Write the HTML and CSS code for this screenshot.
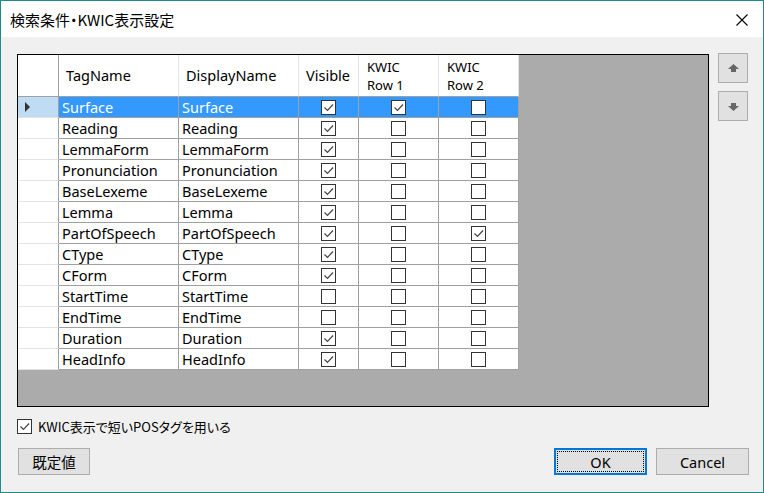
FILE: index.html
```html
<!DOCTYPE html>
<html lang="ja">
<head>
<meta charset="utf-8">
<link rel="stylesheet" href="styles.css">
</head>
<body>
<div class="window">
  <div class="titlebar">
    <span class="title">検索条件・KWIC表示設定</span>
    <svg class="close" width="12" height="12" viewBox="0 0 12 12"><path d="M0.5 0.5 L11.5 11.5 M11.5 0.5 L0.5 11.5" stroke="#000" stroke-width="1.1" fill="none"/></svg>
  </div>
  <div class="content">
    <div class="main">
      <div class="frame">
        <div class="grid">
          <div class="hc corner"></div>
          <div class="hc">TagName</div>
          <div class="hc">DisplayName</div>
          <div class="hc">Visible</div>
          <div class="hc two"><span>KWIC</span><span>Row 1</span></div>
          <div class="hc two"><span>KWIC</span><span>Row 2</span></div>

          <div class="rh sel"><svg width="5" height="10" viewBox="0 0 5 10"><path d="M0 0 L5 5 L0 10 Z" fill="#333"/></svg></div>
          <div class="c t sel">Surface</div><div class="c t sel">Surface</div>
          <div class="c sel"><span class="cb on"><svg viewBox="0 0 13 13"><path d="M2.5 6.5 L5.5 9.5 L11 3.5" stroke="#444" stroke-width="1.2" fill="none"/></svg></span></div>
          <div class="c sel"><span class="cb on"><svg viewBox="0 0 13 13"><path d="M2.5 6.5 L5.5 9.5 L11 3.5" stroke="#444" stroke-width="1.2" fill="none"/></svg></span></div>
          <div class="c sel"><span class="cb"></span></div>

          <div class="rh"></div><div class="c t">Reading</div><div class="c t">Reading</div>
          <div class="c"><span class="cb on"><svg viewBox="0 0 13 13"><path d="M2.5 6.5 L5.5 9.5 L11 3.5" stroke="#444" stroke-width="1.2" fill="none"/></svg></span></div>
          <div class="c"><span class="cb"></span></div><div class="c"><span class="cb"></span></div>

          <div class="rh"></div><div class="c t">LemmaForm</div><div class="c t">LemmaForm</div>
          <div class="c"><span class="cb on"><svg viewBox="0 0 13 13"><path d="M2.5 6.5 L5.5 9.5 L11 3.5" stroke="#444" stroke-width="1.2" fill="none"/></svg></span></div>
          <div class="c"><span class="cb"></span></div><div class="c"><span class="cb"></span></div>

          <div class="rh"></div><div class="c t">Pronunciation</div><div class="c t">Pronunciation</div>
          <div class="c"><span class="cb on"><svg viewBox="0 0 13 13"><path d="M2.5 6.5 L5.5 9.5 L11 3.5" stroke="#444" stroke-width="1.2" fill="none"/></svg></span></div>
          <div class="c"><span class="cb"></span></div><div class="c"><span class="cb"></span></div>

          <div class="rh"></div><div class="c t">BaseLexeme</div><div class="c t">BaseLexeme</div>
          <div class="c"><span class="cb on"><svg viewBox="0 0 13 13"><path d="M2.5 6.5 L5.5 9.5 L11 3.5" stroke="#444" stroke-width="1.2" fill="none"/></svg></span></div>
          <div class="c"><span class="cb"></span></div><div class="c"><span class="cb"></span></div>

          <div class="rh"></div><div class="c t">Lemma</div><div class="c t">Lemma</div>
          <div class="c"><span class="cb on"><svg viewBox="0 0 13 13"><path d="M2.5 6.5 L5.5 9.5 L11 3.5" stroke="#444" stroke-width="1.2" fill="none"/></svg></span></div>
          <div class="c"><span class="cb"></span></div><div class="c"><span class="cb"></span></div>

          <div class="rh"></div><div class="c t">PartOfSpeech</div><div class="c t">PartOfSpeech</div>
          <div class="c"><span class="cb on"><svg viewBox="0 0 13 13"><path d="M2.5 6.5 L5.5 9.5 L11 3.5" stroke="#444" stroke-width="1.2" fill="none"/></svg></span></div>
          <div class="c"><span class="cb"></span></div>
          <div class="c"><span class="cb on"><svg viewBox="0 0 13 13"><path d="M2.5 6.5 L5.5 9.5 L11 3.5" stroke="#444" stroke-width="1.2" fill="none"/></svg></span></div>

          <div class="rh"></div><div class="c t">CType</div><div class="c t">CType</div>
          <div class="c"><span class="cb on"><svg viewBox="0 0 13 13"><path d="M2.5 6.5 L5.5 9.5 L11 3.5" stroke="#444" stroke-width="1.2" fill="none"/></svg></span></div>
          <div class="c"><span class="cb"></span></div><div class="c"><span class="cb"></span></div>

          <div class="rh"></div><div class="c t">CForm</div><div class="c t">CForm</div>
          <div class="c"><span class="cb on"><svg viewBox="0 0 13 13"><path d="M2.5 6.5 L5.5 9.5 L11 3.5" stroke="#444" stroke-width="1.2" fill="none"/></svg></span></div>
          <div class="c"><span class="cb"></span></div><div class="c"><span class="cb"></span></div>

          <div class="rh"></div><div class="c t">StartTime</div><div class="c t">StartTime</div>
          <div class="c"><span class="cb"></span></div>
          <div class="c"><span class="cb"></span></div><div class="c"><span class="cb"></span></div>

          <div class="rh"></div><div class="c t">EndTime</div><div class="c t">EndTime</div>
          <div class="c"><span class="cb"></span></div>
          <div class="c"><span class="cb"></span></div><div class="c"><span class="cb"></span></div>

          <div class="rh"></div><div class="c t">Duration</div><div class="c t">Duration</div>
          <div class="c"><span class="cb on"><svg viewBox="0 0 13 13"><path d="M2.5 6.5 L5.5 9.5 L11 3.5" stroke="#444" stroke-width="1.2" fill="none"/></svg></span></div>
          <div class="c"><span class="cb"></span></div><div class="c"><span class="cb"></span></div>

          <div class="rh"></div><div class="c t">HeadInfo</div><div class="c t">HeadInfo</div>
          <div class="c"><span class="cb on"><svg viewBox="0 0 13 13"><path d="M2.5 6.5 L5.5 9.5 L11 3.5" stroke="#444" stroke-width="1.2" fill="none"/></svg></span></div>
          <div class="c"><span class="cb"></span></div><div class="c"><span class="cb"></span></div>
        </div>
      </div>
      <div class="side">
        <button class="sbtn"><svg width="11" height="9" viewBox="0 0 11 9"><path d="M5.5 0 L11 5 L8 5 L8 8 L3 8 L3 5 L0 5 Z" fill="#666"/></svg></button>
        <button class="sbtn"><svg width="11" height="9" viewBox="0 0 11 9"><path d="M5.5 9 L11 4 L8 4 L8 1 L3 1 L3 4 L0 4 Z" fill="#666"/></svg></button>
      </div>
    </div>
    <label class="opt"><span class="cb on"><svg viewBox="0 0 13 13"><path d="M2.5 6.5 L5.5 9.5 L11 3.5" stroke="#444" stroke-width="1.2" fill="none"/></svg></span><span class="optlabel">KWIC表示で短いPOSタグを用いる</span></label>
    <div class="buttons">
      <button class="btn def">既定値</button>
      <div class="spacer"></div>
      <button class="btn ok"><span class="focus">OK</span></button>
      <button class="btn">Cancel</button>
    </div>
  </div>
</div>
</body>
</html>
```

FILE: styles.css
```css
html, body { margin: 0; padding: 0; }
body {
  font-family: "Noto Sans", "Noto Sans CJK JP", sans-serif;
  font-size: 14.5px;
  color: #000;
  background: #f0f0f0;
}
.window {
  width: 764px;
  height: 493px;
  box-sizing: border-box;
  border: 1px solid #1b8b8d;
  background: #f0f0f0;
  display: flex;
  flex-direction: column;
}
.titlebar {
  height: 36px;
  background: #fff;
  display: flex;
  align-items: center;
  padding-left: 9px;
  padding-right: 15px;
}
.title {
  font-family: "Noto Sans CJK JP", sans-serif;
  font-size: 15px;
  font-feature-settings: "palt";
  flex: 1;
  padding-top: 1px;
}
.close { display: block; margin-top: 1px; }
.content { padding: 17px 14px 0 16px; }
.main { display: flex; align-items: flex-start; }
.frame {
  width: 692px;
  height: 353px;
  box-sizing: border-box;
  border: 1px solid #000;
  background: #ababab;
}
.grid {
  display: grid;
  grid-template-columns: 41px 120px 120px 60px 80px 80px;
  grid-auto-rows: 21px;
  grid-template-rows: 42px;
  width: 501px;
}
.grid > div { box-sizing: border-box; }
.hc {
  background: #fff;
  border-right: 1px solid #e3e3e3;
  border-bottom: 1px solid #a0a0a0;
  display: flex;
  align-items: center;
  padding-left: 7px;
  line-height: 17px;
}
.hc.corner { border-right-color: #a0a0a0; }
.hc.two {
  padding-left: 8px;
  flex-direction: column;
  align-items: flex-start;
  justify-content: center;
  font-size: 13px;
  line-height: 18px;
}
.hc.two span { display: block; height: 18px; white-space: nowrap; }
.rh {
  background: #fff;
  border-right: 1px solid #a0a0a0;
  border-bottom: 1px solid #e3e3e3;
  display: flex;
  align-items: center;
  padding-left: 7px;
}
.rh.sel { background: #bedcf3; }
.rh svg { display: block; }
.c {
  background: #fff;
  border-right: 1px solid #a0a0a0;
  border-bottom: 1px solid #a0a0a0;
  display: flex;
  align-items: center;
  justify-content: center;
}
.c.t { justify-content: flex-start; padding-left: 3px; white-space: nowrap; }
.c.sel { background: #3399ff; color: #fff; }
.cb {
  width: 15px;
  height: 15px;
  box-sizing: border-box;
  border: 1px solid #333;
  background: #fff;
  display: block;
  margin-left: -1px;
}
.cb svg { display: block; width: 13px; height: 13px; }
.side {
  margin-left: 9px;
  margin-top: -1px;
  display: flex;
  flex-direction: column;
  gap: 8px;
}
.sbtn {
  width: 30px;
  height: 30px;
  box-sizing: border-box;
  border: 1px solid #adadad;
  background: #e1e1e1;
  padding: 0;
  display: flex;
  align-items: center;
  justify-content: center;
}
.sbtn svg { display: block; }
.opt {
  display: flex;
  align-items: center;
  margin-top: 12px;
  height: 15px;
}
.opt .cb { margin-left: 0; }
.optlabel {
  margin-left: 6px;
  font-family: "Noto Sans CJK JP", sans-serif;
  font-feature-settings: "palt";
  font-size: 13px;
}
.buttons {
  display: flex;
  margin-top: 14px;
}
.spacer { flex: 1; }
.btn {
  height: 27px;
  box-sizing: border-box;
  border: 1px solid #adadad;
  background: #e1e1e1;
  font-family: "Noto Sans", "Noto Sans CJK JP", sans-serif;
  font-size: 14.5px;
  color: #000;
  padding: 0;
  width: 93px;
  margin-left: 9px;
}
.btn.def { width: 72px; margin-left: 1px; }
.btn.ok {
  border: 2px solid #0078d7;
  padding: 1px;
  margin-left: 0;
}
.btn.ok .focus {
  display: flex;
  align-items: center;
  justify-content: center;
  height: 100%;
  box-sizing: border-box;
  border: 1px dotted #000;
}
```
